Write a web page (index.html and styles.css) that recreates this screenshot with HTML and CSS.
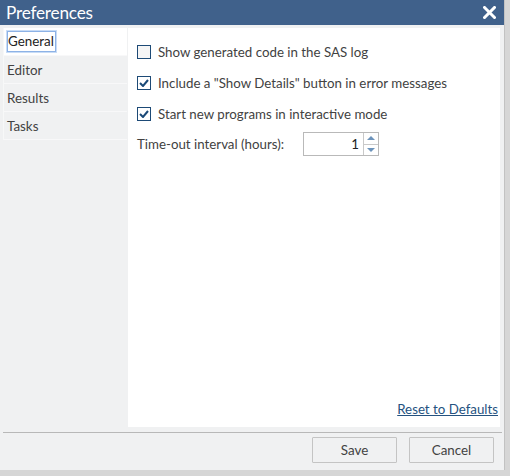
FILE: index.html
```html
<!DOCTYPE html>
<html>
<head>
<meta charset="utf-8">
<link rel="stylesheet" href="styles.css">
</head>
<body>
<div class="dialog">
  <div class="titlebar">
    <span class="title">Preferences</span>
    <svg class="close" width="13" height="13" viewBox="0 0 13 13"><path d="M1.5 1.5 L11.5 11.5 M11.5 1.5 L1.5 11.5" stroke="#fff" stroke-width="3" stroke-linecap="square"/></svg>
  </div>
  <div class="body">
    <ul class="nav">
      <li class="item selected"><span class="focus">General</span></li>
      <li class="item">Editor</li>
      <li class="item">Results</li>
      <li class="item">Tasks</li>
    </ul>
    <div class="panel">
      <div class="options">
        <label class="opt"><span class="cb"></span>Show generated code in the SAS log</label>
        <label class="opt"><span class="cb checked"><svg width="10" height="8" viewBox="0 0 10 8"><path d="M1 4 L4 7 L9 1" fill="none" stroke="#1b4a78" stroke-width="2"/></svg></span>Include a "Show Details" button in error messages</label>
        <label class="opt"><span class="cb checked"><svg width="10" height="8" viewBox="0 0 10 8"><path d="M1 4 L4 7 L9 1" fill="none" stroke="#1b4a78" stroke-width="2"/></svg></span>Start new programs in interactive mode</label>
        <div class="timeout">
          <span class="tlabel">Time-out interval (hours):</span>
          <div class="spin">
            <span class="value">1</span>
            <div class="arrows">
              <span class="up"></span>
              <span class="down"></span>
            </div>
          </div>
        </div>
      </div>
      <a class="reset" href="#">Reset to Defaults</a>
    </div>
  </div>
  <div class="footer">
    <button class="btn">Save</button>
    <button class="btn">Cancel</button>
  </div>
</div>
</body>
</html>
```
FILE: styles.css
```css
html, body {
  margin: 0;
  padding: 0;
}
body {
  width: 510px;
  height: 476px;
  background: #d6d6d6;
  font-family: Lato, "Open Sans", sans-serif;
  font-size: 13.3px;
  color: #424242;
  overflow: hidden;
}
.dialog {
  width: 505px;
  height: 470px;
  background: #f0f1f2;
  border-right: 1px solid #c2c2c2;
  box-sizing: border-box;
  display: flex;
  flex-direction: column;
}
.titlebar {
  height: 25px;
  background: #40618b;
  display: flex;
  align-items: center;
  justify-content: space-between;
  padding: 0 8px 0 6px;
  flex: none;
}
.title {
  color: #fff;
  font-size: 17.2px;
  letter-spacing: -0.2px;
}
.close {
  display: block;
  margin-top: -1px;
}
.body {
  display: flex;
  padding: 3px 4px 0 3px;
  height: 399px;
  flex: none;
}
.nav {
  list-style: none;
  margin: 0;
  padding: 0;
  width: 124px;
  flex: none;
  align-self: flex-start;
  border-left: 1px solid #f7f8f8;
  box-sizing: border-box;
}
.item {
  height: 28px;
  box-sizing: border-box;
  display: flex;
  align-items: center;
  padding-left: 3px;
  background: #f0f1f2;
  border-bottom: 1px solid #f8f8f9;
  font-size: 13.4px;
}
.item.selected {
  background: #fff;
}
.focus {
  border: 1px solid #8db2e6;
  box-shadow: 0 0 0 1px #c8dcf6;
  padding: 1px 1px 1px 0;
  line-height: 17px;
  color: #222;
}
.panel {
  flex: 1;
  margin-left: 1px;
  background: #fff;
  display: flex;
  flex-direction: column;
  justify-content: space-between;
  padding: 15px 2px 10px 9px;
  box-sizing: border-box;
}
.options {
  display: flex;
  flex-direction: column;
}
.opt {
  display: flex;
  align-items: center;
  height: 17px;
  margin-bottom: 14px;
  white-space: nowrap;
}
.cb {
  width: 14px;
  height: 14px;
  box-sizing: border-box;
  border: 1.5px solid #1d4a76;
  background: #f5f5f5;
  margin-right: 7px;
  display: flex;
  align-items: center;
  justify-content: center;
  flex: none;
}
.cb.checked {
  background: #fff;
}
.cb svg {
  display: block;
}
.timeout {
  display: flex;
  align-items: center;
  margin-top: -4px;
}
.tlabel {
  width: 166px;
}
.spin {
  width: 76px;
  height: 24px;
  box-sizing: border-box;
  border: 1px solid #b9b9b9;
  display: flex;
}
.value {
  flex: 1;
  text-align: right;
  padding-right: 4px;
  line-height: 22px;
  color: #222;
}
.arrows {
  width: 14px;
  border-left: 1px solid #c9c9c9;
  display: flex;
  flex-direction: column;
}
.up, .down {
  flex: 1;
  display: flex;
  align-items: center;
  justify-content: center;
}
.up {
  border-bottom: 1px solid #c9c9c9;
}
.up::after {
  content: "";
  border-left: 4px solid transparent;
  border-right: 4px solid transparent;
  border-bottom: 4px solid #6c93bb;
}
.down::after {
  content: "";
  border-left: 4px solid transparent;
  border-right: 4px solid transparent;
  border-top: 4px solid #6c93bb;
}
.reset {
  align-self: flex-end;
  color: #25527f;
  text-decoration: underline;
}
.footer {
  margin: 5px 2px 0 3px;
  border-top: 1px solid #b8b8b8;
  display: flex;
  justify-content: flex-end;
  gap: 12px;
  padding: 4px 8px 0 0;
}
.btn {
  width: 85px;
  height: 26px;
  background: #f0f1f2;
  border: 1px solid #c4c4c4;
  border-radius: 1px;
  font-family: Lato, "Open Sans", sans-serif;
  font-size: 13.4px;
  color: #424242;
  padding: 0;
}
```
